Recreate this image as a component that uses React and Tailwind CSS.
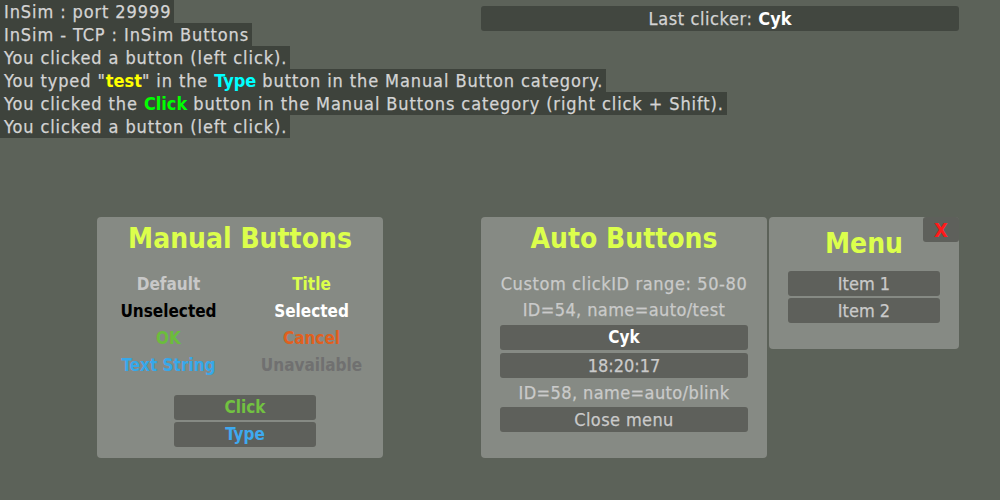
import React from "react";

const F = { fontFamily: '"DejaVu Sans Condensed", "DejaVu Sans", sans-serif' };

function LogLine({ children }) {
  return (
    <div className="h-[23px] w-fit whitespace-nowrap bg-[#3e433c] pl-[4px] pr-[3px] text-[18px] leading-[23px] tracking-[0.9px] text-[#d4d4d4] [-webkit-text-stroke:0.25px]">
      {children}
    </div>
  );
}

function DarkBtn({ className = "", children }) {
  return (
    <div className={"flex h-[25px] items-center justify-center rounded-[3px] bg-[#5e605b] " + className}>
      {children}
    </div>
  );
}

export default function App() {
  return (
    <div className="flex h-[500px] w-[1000px] flex-col overflow-hidden bg-[#5c6259]" style={F}>
      <div className="flex h-[139px] items-start">
        <div className="flex w-[481px] shrink-0 flex-col">
          <LogLine>InSim : port 29999</LogLine>
          <LogLine>InSim - TCP : InSim Buttons</LogLine>
          <LogLine>You clicked a button (left click).</LogLine>
          <LogLine>
            You typed "<span className="font-bold tracking-[0px] text-[#ffff00] [-webkit-text-stroke:0px]">test</span>" in the{" "}
            <span className="font-bold tracking-[0px] text-[#00ffff] [-webkit-text-stroke:0px]">Type</span> button in the Manual Button category.
          </LogLine>
          <LogLine>
            You clicked the <span className="font-bold tracking-[0px] text-[#00ff00] [-webkit-text-stroke:0px]">Click</span> button in the Manual
            Buttons category (right click + Shift).
          </LogLine>
          <LogLine>You clicked a button (left click).</LogLine>
        </div>
        <div className="mt-[6px] flex h-[25px] w-[478px] items-center justify-center rounded-[3px] bg-[#424740] text-[18px] tracking-[0.6px] text-[#d4d4d4] [-webkit-text-stroke:0.25px]">
          Last clicker:&nbsp;<span className="font-bold tracking-[0px] text-white [-webkit-text-stroke:0px]">Cyk</span>
        </div>
      </div>

      <div className="mt-[78px] flex items-start pl-[97px]">
        {/* Manual Buttons */}
        <div className="flex h-[241px] w-[286px] flex-col rounded-[4px] bg-[#868a84]">
          <div className="mt-[5px] flex h-[34px] items-center justify-center text-[28px] font-bold text-[#dcff4c]">
            Manual Buttons
          </div>
          <div className="mt-[15px] grid grid-cols-2 text-[17px] font-bold leading-[27px]">
            <div className="text-center text-[#c8c8c8]">Default</div>
            <div className="text-center text-[#dcff4c]">Title</div>
            <div className="text-center text-black">Unselected</div>
            <div className="text-center text-white">Selected</div>
            <div className="text-center text-[#6bbd3c]">OK</div>
            <div className="text-center text-[#e0601e]">Cancel</div>
            <div className="text-center text-[#36a8ea]">Text String</div>
            <div className="text-center text-[#707070]">Unavailable</div>
          </div>
          <div className="ml-[77px] mt-[16px] flex w-[142px] flex-col gap-[2px]">
            <DarkBtn className="text-[17px] font-bold text-[#72c241]">Click</DarkBtn>
            <DarkBtn className="text-[17px] font-bold text-[#3ea9f0]">Type</DarkBtn>
          </div>
        </div>

        {/* Auto Buttons */}
        <div className="ml-[98px] flex h-[241px] w-[286px] flex-col items-center rounded-[4px] bg-[#868a84] [-webkit-text-stroke:0.25px]">
          <div className="mt-[5px] flex h-[34px] items-center justify-center text-[28px] font-bold text-[#dcff4c] [-webkit-text-stroke:0px]">
            Auto Buttons
          </div>
          <div className="mt-[14px] flex h-[26px] items-center text-[18px] tracking-[0.6px] text-[#cacaca]">
            Custom clickID range: 50-80
          </div>
          <div className="flex h-[26px] items-center text-[18px] tracking-[0.4px] text-[#cacaca]">
            ID=54, name=auto/test
          </div>
          <div className="mt-[3px] flex w-[248px] flex-col gap-[3px]">
            <DarkBtn className="h-[24px] text-[17px] font-bold text-white [-webkit-text-stroke:0px]">Cyk</DarkBtn>
            <DarkBtn className="text-[18px] text-[#cacaca]">18:20:17</DarkBtn>
          </div>
          <div className="flex h-[29px] items-center text-[18px] tracking-[0.4px] text-[#cacaca]">
            ID=58, name=auto/blink
          </div>
          <div className="w-[248px]">
            <DarkBtn className="text-[18px] tracking-[0.4px] text-[#cacaca]">Close menu</DarkBtn>
          </div>
        </div>

        {/* Menu */}
        <div className="relative ml-[2px] flex h-[132px] w-[190px] flex-col items-center rounded-[4px] bg-[#868a84]">
          <div className="absolute right-0 top-0 flex h-[25px] w-[36px] items-center justify-center rounded-[3px] bg-[#5e605b] text-[20px] font-bold text-[#ff1a1a]">
            X
          </div>
          <div className="mt-[12px] flex h-[30px] items-center text-[28px] font-bold text-[#dcff4c]">Menu</div>
          <div className="mt-[12px] flex w-[152px] flex-col gap-[2px] [-webkit-text-stroke:0.25px]">
            <DarkBtn className="text-[18px] text-[#cacaca]">Item 1</DarkBtn>
            <DarkBtn className="text-[18px] text-[#cacaca]">Item 2</DarkBtn>
          </div>
        </div>
      </div>
    </div>
  );
}
